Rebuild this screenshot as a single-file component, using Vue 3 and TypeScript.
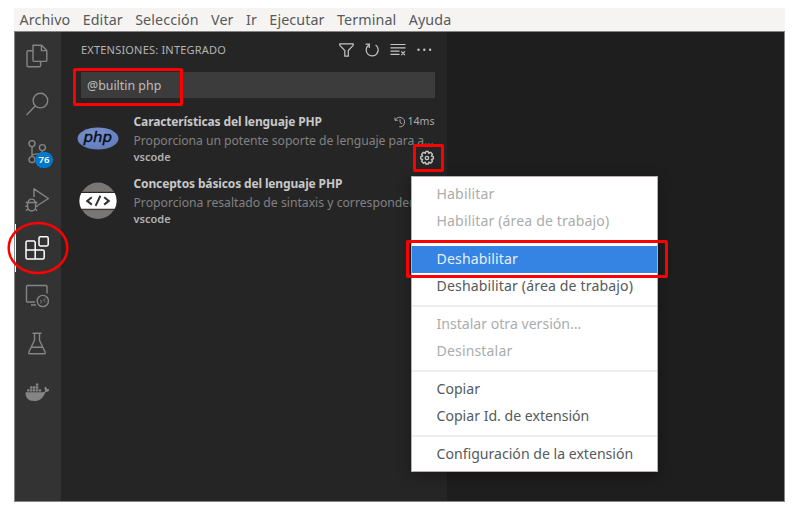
<script setup lang="ts">
interface Action { label: string; kind: 'item' | 'active' | 'disabled' | 'separator'; loose?: boolean }

const menus: string[] = ['Archivo', 'Editar', 'Selección', 'Ver', 'Ir', 'Ejecutar', 'Terminal', 'Ayuda']

const sep: Action = { label: '', kind: 'separator' }
const actions: Action[] = [
  { label: 'Habilitar', kind: 'disabled', loose: true },
  { label: 'Habilitar (área de trabajo)', kind: 'disabled', loose: true },
  sep,
  { label: 'Deshabilitar', kind: 'active', loose: true },
  { label: 'Deshabilitar (área de trabajo)', kind: 'item', loose: true },
  sep,
  { label: 'Instalar otra versión...', kind: 'disabled' },
  { label: 'Desinstalar', kind: 'disabled', loose: true },
  sep,
  { label: 'Copiar', kind: 'item' },
  { label: 'Copiar Id. de extensión', kind: 'item' },
  sep,
  { label: 'Configuración de la extensión', kind: 'item' },
]
</script>

<template>
  <div class="screen">
    <div class="window">
      <nav class="menubar">
        <span v-for="m in menus" :key="m" class="menu">{{ m }}</span>
      </nav>
      <div class="body">
        <aside class="activity">
          <div class="act">
            <svg viewBox="0 0 24 24"><path d="M8 1.200h8.600l5.200 5.200v9.800a1.200 1.200 0 0 1-1.200 1.200H9.200A1.200 1.200 0 0 1 8 16.200zM16.400 1.400v5.200h5.200M7.800 6.800H3.200A1.200 1.200 0 0 0 2 8v13.600a1.200 1.200 0 0 0 1.200 1.200h11.200a1.200 1.200 0 0 0 1.200-1.200v-4" /></svg>
          </div>
          <div class="act">
            <svg viewBox="0 0 24 24"><circle cx="15.400" cy="8.600" r="7.300" /><path d="M10.200 14L1.600 23" /></svg>
          </div>
          <div class="act">
            <svg viewBox="0 0 24 24"><circle cx="7" cy="3.600" r="3" /><circle cx="17.400" cy="7.600" r="3" /><circle cx="7" cy="19.600" r="3" /><path d="M7 6.600v10M17.400 10.600c0 3.800-4 3.500-7 3.500-2 0-3.400.8-3.400 2.500" /></svg>
            <span class="badge">76</span>
          </div>
          <div class="act">
            <svg viewBox="0 0 24 24"><path d="M9 9V.8L23.400 10.500 12.500 17.500M3.200 14.500a3.400 3.400 0 0 1 6.800 0M2.600 14.500h8v4.500a4 4 0 0 1-8 0zM2.600 15.500L.9 13.800M10.600 15.500l1.700-1.700M2.600 18.300H.4M10.600 18.300h2.200M3 20.800l-1.900 1.900M10.200 20.800l1.900 1.900" /></svg>
          </div>
          <div class="act current">
            <svg viewBox="0 0 24 24"><path d="M9.700 5H2.500A1.500 1.500 0 0 0 1 6.500v15A1.500 1.500 0 0 0 2.500 23h15.200a1.500 1.500 0 0 0 1.500-1.500v-6a1.500 1.500 0 0 0-1.500-1.500H1M10.200 23V6.500A1.500 1.500 0 0 0 8.700 5" /><rect x="14" y=".8" width="9.200" height="9.200" rx="1.400" /></svg>
          </div>
          <div class="act">
            <svg viewBox="0 0 24 24"><path d="M10 18H2.500a1 1 0 0 1-1-1V2.500a1 1 0 0 1 1-1H21a1 1 0 0 1 1 1v7M6 21h5" /><circle cx="17.800" cy="17" r="5.600" /><path class="thin" d="M15 16l2 1.600-2 1.800M20.500 14.500l-2 1.600 2 1.800" /></svg>
          </div>
          <div class="act">
            <svg viewBox="0 0 24 24"><path d="M7.500 1.300h9M9.500 1.300v7L3.800 20.200a1.100 1.100 0 0 0 1 1.600h14.400a1.100 1.100 0 0 0 1-1.600L14.500 8.300v-7M6.600 15.300h10.800" /></svg>
          </div>
          <div class="act">
            <svg class="solid" viewBox="0 0 24 24"><path d="M.5 12.300h17.600c1.200 0 2-.5 2.100-1.700-1-1.300-.9-3 .1-4.100 1.100.7 1.600 1.600 1.700 2.600 1-.1 1.700 0 2.400.5-.6 1.700-1.900 2.300-3.900 2.300-2 5.600-5.500 9.100-11.300 9.100C3.300 21 .5 18.200.5 12.300z" /><path d="M2.200 9.200h2.400v2.400H2.200zM5.100 9.200h2.400v2.400H5.100zM8 9.200h2.400v2.400H8zM10.900 9.200h2.400v2.400h-2.400zM13.800 9.200h2.400v2.400h-2.400zM5.100 6.300h2.400v2.400H5.100zM8 6.300h2.400v2.400H8zM10.900 6.300h2.400v2.400h-2.400zM10.900 3.400h2.400v2.400h-2.400z" /></svg>
          </div>
        </aside>

        <section class="sidebar">
          <header class="head">
            <h1>EXTENSIONES: INTEGRADO</h1>
            <div class="tools">
              <svg viewBox="0 0 16 16"><path d="M1.800 1.800h13.400v1.500L10.300 8.500v5.700H6.800V8.500L1.800 3.300z" /></svg>
              <svg viewBox="0 0 16 16"><path d="M4.500 3.200A6 6 0 1 0 11.600 3M1.600 2.200h3.700v3.700" /></svg>
              <svg viewBox="0 0 16 16"><path d="M.5 2.500h15M.5 5.800h15M.5 9.100h9M.5 12.400h9M11.300 9.300l3.700 3.900M15 9.300l-3.700 3.900" /></svg>
              <svg class="solid" viewBox="0 0 16 16"><circle cx="2.500" cy="7.800" r="1.200" /><circle cx="8.300" cy="7.800" r="1.200" /><circle cx="14.100" cy="7.800" r="1.200" /></svg>
            </div>
          </header>
          <div class="search">@builtin php<i class="mark search-mark"></i></div>

          <article class="ext">
            <svg class="logo" viewBox="0 0 42 42">
              <defs>
                <radialGradient id="php" cx=".4" cy=".3" r=".8"><stop offset="0" stop-color="#7892ce" /><stop offset="1" stop-color="#5f7bba" /></radialGradient>
              </defs>
              <ellipse cx="21" cy="21.500" rx="20.500" ry="11" fill="url(#php)" />
              <text class="php" x="20.800" y="25.200" textLength="28.500" lengthAdjust="spacingAndGlyphs">php</text>
            </svg>
            <div class="info">
              <div class="title"><b class="t1">Características del lenguaje PHP</b>
                <span class="time"><svg viewBox="0 0 16 16"><path d="M1.300 2v3.700H5M2 5.500A6.300 6.300 0 1 1 7 14.400M8 4.300v4l2.800 2.500" /></svg>14ms</span>
              </div>
              <p class="d1">Proporciona un potente soporte de lenguaje para a...</p>
              <div class="pub">vscode<span class="gear"><svg viewBox="0 0 16 16"><circle cx="8" cy="8" r="1.700" /><path d="M6.900 1.200h2.200l.5 1.700 1.700-.9 1.700 1.700-.9 1.700 1.700.5v2.200l-1.700.5.9 1.700-1.700 1.700-1.700-.9-.5 1.700H6.900l-.5-1.700-1.700.9L3 10.300l.9-1.700-1.700-.5V5.900l1.700-.5L3 3.700 4.700 2l1.700.9z" transform="translate(-.6 .2) scale(1.080)" /></svg><i class="mark gear-mark"></i></span></div>
            </div>
          </article>

          <article class="ext">
            <svg class="logo second" viewBox="0 0 42 42">
              <circle cx="21" cy="20.800" r="18.200" fill="#777" />
              <path d="M2 11.700h38v18.200H2z" fill="#252526" />
              <path d="M5.300 11.600h31.400M5.300 30h31.400" stroke="#75654f" stroke-width=".7" />
              <path d="M4.200 13h33.600a18.500 18.500 0 0 1 0 15.800H4.200a18.500 18.500 0 0 1 0-15.800z" fill="#fff" />
              <path class="code" d="M14.800 17.200l-4.600 3.700 4.600 3.700M23.400 15.700l-4.800 10.200M27.200 17.200l4.600 3.700-4.600 3.700" />
            </svg>
            <div class="info">
              <div class="title"><b class="t2">Conceptos básicos del lenguaje PHP</b></div>
              <p class="d2">Proporciona resaltado de sintaxis y correspondencia</p>
              <div class="pub">vscode</div>
            </div>
          </article>
        </section>
        <main class="editor"></main>
      </div>
    </div>

    <div class="context">
      <div v-for="(a, i) in actions" :key="i" :class="['row', a.kind, { loose: a.loose }]">{{ a.label }}<i v-if="a.kind === 'active'" class="mark row-mark"></i></div>
    </div>
    <svg class="ring" viewBox="0 0 64 56"><ellipse cx="32" cy="28" rx="29.300" ry="25" /></svg>
  </div>
</template>

<style>
body { margin: 0; background: #fff; overflow: hidden; }
</style>

<style scoped>
.screen { position: relative; width: 792px; height: 509px; box-sizing: border-box; padding: 8px 7px 7px 14px; font-family: "Noto Sans", sans-serif; background: #fff; overflow: hidden; }
.window { width: 771px; height: 494px; display: flex; flex-direction: column; }
.menubar { height: 23px; flex: none; display: flex; align-items: center; gap: 12.400px; padding-left: 5.500px; background: #f5f4f2; }
.menu { font-size: 14.300px; letter-spacing: .1px; line-height: 23px; color: #555a5b; }
.body { flex: 1; display: flex; box-sizing: border-box; border: 1px solid #858585; border-width: 1px 1px 1px .5px; background: #1e1e1e; }
.activity { width: 46px; flex: none; background: #333; display: flex; flex-direction: column; }
.act { height: 48px; display: flex; align-items: center; justify-content: center; position: relative; padding-right: 2px; }
.act svg { width: 24px; height: 24px; fill: none; stroke: #858585; stroke-width: 1.400; stroke-linejoin: round; }
.act svg .thin { stroke-width: .9; }
.act svg.solid { fill: #858585; stroke: none; }
.act.current svg { stroke: #fff; stroke-width: 1.500; }
.act.current::before { content: ""; position: absolute; left: 0; top: 0; width: 1px; height: 48px; background: #fff; }
.badge { position: absolute; left: 20px; top: 24px; width: 18px; height: 16px; border-radius: 8px; background: #0079cc; color: #fff; font-size: 9.500px; font-weight: 600; line-height: 16px; text-align: center; }
.sidebar { width: 386px; flex: none; background: #252526; box-sizing: border-box; padding: 0 12px 0 20px; }
.head { height: 35px; display: flex; align-items: center; justify-content: space-between; }
h1 { margin: 0; font-size: 11px; letter-spacing: .2px; font-weight: 400; color: #b4b4b4; white-space: nowrap; }
.tools { display: flex; gap: 10px; padding-right: 3px; }
.tools svg { width: 16px; height: 16px; fill: none; stroke: #c5c5c5; stroke-width: 1.200; }
.tools svg.solid { fill: #c5c5c5; stroke: none; }
.search { position: relative; height: 26px; margin-top: 5px; padding-left: 6px; background: #3c3c3c; color: #bdbdbd; font-size: 12.400px; line-height: 27px; width: 348px; margin-bottom: 14px; }
.mark { position: absolute; box-sizing: border-box; border: 3px solid #f00; border-radius: 2px; }
.search-mark { left: -8px; top: -4px; width: 110px; height: 38px; }
.ext { height: 62px; display: flex; }
.logo { width: 42px; height: 42px; margin: 5px 0 0 -4px; flex: none; }
.logo.second { margin-top: 6px; }
.php { font: italic 400 14.500px "DejaVu Sans", sans-serif; text-anchor: middle; fill: #080a12; stroke: #080a12; stroke-width: .4; }
.code { fill: none; stroke: #333; stroke-width: 2; }
.info { width: 301px; margin-left: 14.500px; color: #c8c8c8; font-size: 12px; }
.title { display: flex; justify-content: space-between; height: 19px; line-height: 19px; white-space: nowrap; }
.title b { font-weight: 700; }
.t1 { letter-spacing: -.13px; }
.t2 { letter-spacing: -.14px; }
.time { display: flex; align-items: center; gap: 1px; font-size: 10.600px; color: #aaa; }
.time svg { width: 12px; height: 12px; fill: none; stroke: #aaa; stroke-width: 1.300; }
.info p { margin: 0; height: 19px; line-height: 19px; font-size: 12.200px; color: #828282; white-space: nowrap; }
.info .d1 { letter-spacing: -.05px; }
.pub { position: relative; height: 17px; display: flex; justify-content: space-between; line-height: 14px; font-size: 11px; font-weight: 600; color: #b2b2b2; }
.gear { position: relative; width: 16px; height: 16px; }
.gear svg { display: block; width: 16px; height: 16px; fill: none; stroke: #c5c5c5; stroke-width: 1.300; stroke-linejoin: round; }
.gear-mark { left: -6px; top: -6px; width: 31px; height: 28px; }
.editor { flex: 1; background: #1e1e1e; }
.context { position: absolute; left: 411px; top: 176px; width: 247px; height: 296px; box-sizing: border-box; padding: 4px 0; border: 1px solid #b8b0ac; background: #fff; box-shadow: 0 3px 12px rgba(0,0,0,.35); }
.row { position: relative; height: 27px; line-height: 26px; padding-left: 24.500px; font-size: 14.100px; color: #555a5b; white-space: nowrap; }
.row.loose { letter-spacing: .13px; }
.row.disabled { color: #aaadac; }
.row.active { background: #3584e4; color: #e6effb; }
.row.separator { height: 11px; padding: 0; display: flex; align-items: center; }
.row.separator::after { content: ""; height: 2px; flex: 1; background: #eee; }
.row-mark { left: -6px; top: -6px; width: 262px; height: 38px; }
.ring { position: absolute; left: 6px; top: 220px; width: 64px; height: 56px; fill: none; stroke: #f00; stroke-width: 2.500; }
</style>
